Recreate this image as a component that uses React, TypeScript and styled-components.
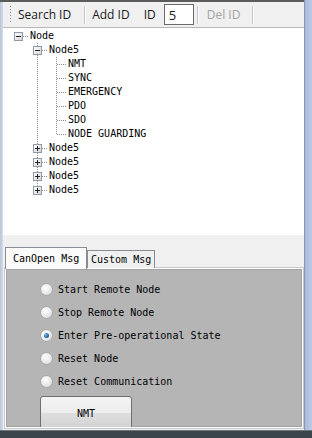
import React from 'react';
import styled, { createGlobalStyle } from 'styled-components';

const GlobalStyle = createGlobalStyle`
  html, body {
    margin: 0;
    padding: 0;
    width: 312px;
    height: 438px;
    overflow: hidden;
    background: #f0f0f0;
  }
`;

const Frame = styled.div`
  width: 312px;
  height: 438px;
  display: flex;
  flex-direction: column;
`;

const Body = styled.div`
  flex: 1;
  display: flex;
  min-height: 0;
`;

const LeftEdge = styled.div`
  width: 3px;
  background: linear-gradient(to right, #b7c4d8, #d3dcea);
  border-top: 2px solid #5b5b5b;
`;

const RightEdge = styled.div`
  width: 7px;
  border-left: 1px solid #8796b3;
  background: linear-gradient(to right, #a9b9d9, #bccbe6);
`;

const BottomBar = styled.div`
  height: 7px;
  background: #3c444c;
  border-top: 1px solid #6d7680;
`;

const Main = styled.div`
  flex: 1;
  display: flex;
  flex-direction: column;
  min-width: 0;
`;

const Toolbar = styled.div`
  height: 25px;
  border-top: 2px solid #5b5b5b;
  border-bottom: 1px solid #b8b8b8;
  background: #f0f0f0;
  display: flex;
  align-items: center;
  font-family: 'Open Sans', 'Liberation Sans', sans-serif;
  font-size: 12px;
  color: #1a1a1a;
`;

const Grip = styled.div`
  width: 3px;
  height: 18px;
  margin-left: 6px;
  background-image: repeating-linear-gradient(to bottom, #8a8a8a 0 1px, transparent 1px 3px);
  background-size: 1px 100%;
  background-repeat: no-repeat;
  background-position: 1px 0;
`;

const ToolButton = styled.span<{ $disabled?: boolean; $gap?: number }>`
  padding: 0 4px;
  margin-left: ${(p) => p.$gap ?? 2}px;
  color: ${(p) => (p.$disabled ? '#a3a3a3' : '#1a1a1a')};
  white-space: nowrap;
`;

const Separator = styled.div<{ $gap: number }>`
  width: 1px;
  height: 18px;
  margin-left: ${(p) => p.$gap}px;
  background: #c4c4c4;
  box-shadow: 1px 0 0 #ffffff;
`;

const IdBox = styled.div`
  height: 19px;
  width: 24px;
  margin-left: 4px;
  border: 1px solid #6a6a6a;
  background: #ffffff;
  display: flex;
  align-items: center;
  padding-left: 4px;
  box-sizing: content-box;
  font-size: 13px;
`;

const Tree = styled.div`
  height: 206px;
  background: #ffffff;
  padding: 1px 0 0 6px;
  font-family: 'DejaVu Sans Mono', 'Liberation Mono', monospace;
  font-size: 10px;
  color: #000000;
`;

const TreeRow = styled.div`
  display: flex;
  height: 14px;
  align-items: center;
`;

const dotsV = 'repeating-linear-gradient(to bottom, #8c8c8c 0 1px, transparent 1px 2px)';
const dotsH = 'repeating-linear-gradient(to right, #8c8c8c 0 1px, transparent 1px 2px)';

const Guide = styled.div<{ $line: boolean }>`
  width: 19px;
  height: 14px;
  flex: none;
  position: relative;
  &::before {
    content: '';
    display: ${(p) => (p.$line ? 'block' : 'none')};
    position: absolute;
    left: 9px;
    top: 0;
    bottom: 0;
    width: 1px;
    background: ${dotsV};
  }
`;

const Joint = styled.div<{ $up: boolean; $down: boolean }>`
  width: 19px;
  height: 14px;
  flex: none;
  position: relative;
  &::before {
    content: '';
    display: ${(p) => (p.$up || p.$down ? 'block' : 'none')};
    position: absolute;
    left: 9px;
    top: ${(p) => (p.$up ? 0 : 7)}px;
    bottom: ${(p) => (p.$down ? 0 : 7)}px;
    width: 1px;
    background: ${dotsV};
  }
  &::after {
    content: '';
    position: absolute;
    left: 10px;
    right: 0;
    top: 7px;
    height: 1px;
    background: ${dotsH};
  }
`;

const ExpanderBox = styled.svg`
  position: absolute;
  left: 5px;
  top: 3px;
  z-index: 1;
`;

const Label = styled.span`
  margin-left: 2px;
  white-space: pre;
  line-height: 14px;
`;

const TabArea = styled.div`
  flex: 1;
  display: flex;
  flex-direction: column;
  padding: 12px 1px 2px 2px;
  background: #f0f0f0;
  min-height: 0;
`;

const TabStrip = styled.div`
  display: flex;
  align-items: flex-end;
  height: 21px;
  font-family: 'DejaVu Sans Mono', 'Liberation Mono', monospace;
  font-size: 10px;
`;

const Tab = styled.div<{ $active?: boolean }>`
  height: ${(p) => (p.$active ? 21 : 17)}px;
  padding: 0 ${(p) => (p.$active ? 7 : 3)}px;
  width: ${(p) => (p.$active ? 66 : 60)}px;
  display: flex;
  align-items: center;
  border: 1px solid #898c95;
  border-bottom: none;
  background: ${(p) => (p.$active ? '#fbfbfb' : '#f0f0f0')};
  position: relative;
  z-index: ${(p) => (p.$active ? 2 : 0)};
  margin-bottom: ${(p) => (p.$active ? -1 : 0)}px;
  white-space: pre;
  box-sizing: content-box;
`;

const Panel = styled.div`
  flex: 1;
  min-height: 0;
  overflow: hidden;
  border: 1px solid #ffffff;
  box-shadow: inset 0 0 0 1px #a3a3a3, 0 0 0 1px #c8c8c8;
  background: #b5b5b5;
  padding: 9px 0 0 34px;
  font-family: 'DejaVu Sans Mono', 'Liberation Mono', monospace;
  font-size: 10px;
  color: #000000;
`;

const RadioRow = styled.label`
  display: flex;
  align-items: center;
  height: 23px;
  gap: 5px;
  white-space: pre;
`;

const RadioDot = styled.span<{ $checked?: boolean }>`
  width: 11px;
  height: 11px;
  border-radius: 50%;
  border: 1px solid #a9a9a9;
  background: radial-gradient(circle at 40% 35%, #ffffff 0, #f1f1f1 35%, #d6d6d6 100%);
  display: flex;
  align-items: center;
  justify-content: center;
  flex: none;
  &::after {
    content: '';
    display: ${(p) => (p.$checked ? 'block' : 'none')};
    width: 5px;
    height: 5px;
    border-radius: 50%;
    background: radial-gradient(circle at 35% 35%, #7fb4e6 0, #2a6db0 55%, #123e73 100%);
  }
`;

const NmtButton = styled.button`
  margin-top: 3px;
  width: 92px;
  height: 34px;
  border: 1px solid #707070;
  border-radius: 3px;
  background: linear-gradient(to bottom, #f4f4f4 0%, #ececec 50%, #dedede 50%, #d2d2d2 100%);
  font-family: 'DejaVu Sans Mono', 'Liberation Mono', monospace;
  font-size: 10px;
  color: #000000;
  padding: 0;
`;

type Node = { label: string; open?: boolean; children?: Node[] };

const leaves = ['NMT', 'SYNC', 'EMERGENCY', 'PDO', 'SDO', 'NODE GUARDING'].map((label) => ({ label }));

const tree: Node[] = [
  {
    label: 'Node',
    open: true,
    children: [
      { label: 'Node5', open: true, children: leaves },
      { label: 'Node5', children: [{ label: 'x' }] },
      { label: 'Node5', children: [{ label: 'x' }] },
      { label: 'Node5', children: [{ label: 'x' }] },
      { label: 'Node5', children: [{ label: 'x' }] },
    ],
  },
];

type FlatRow = { label: string; level: number; guides: boolean[]; hasNext: boolean; expandable: boolean; open: boolean };

function flatten(nodes: Node[], level: number, guides: boolean[], out: FlatRow[]) {
  nodes.forEach((n, i) => {
    const hasNext = i < nodes.length - 1;
    out.push({ label: n.label, level, guides, hasNext, expandable: !!n.children, open: !!n.open });
    if (n.children && n.open) flatten(n.children, level + 1, [...guides, hasNext], out);
  });
  return out;
}

const Expander = ({ open }: { open: boolean }) => (
  <ExpanderBox width="9" height="9" viewBox="0 0 9 9">
    <defs>
      <linearGradient id="exp" x1="0" y1="0" x2="1" y2="1">
        <stop offset="0" stopColor="#ffffff" />
        <stop offset="1" stopColor="#d4d4d4" />
      </linearGradient>
    </defs>
    <rect x="0.5" y="0.5" width="8" height="8" fill="url(#exp)" stroke="#8f9aa8" />
    <path d="M2 4.5h5" stroke="#222" strokeWidth="1" />
    {!open && <path d="M4.5 2v5" stroke="#222" strokeWidth="1" />}
  </ExpanderBox>
);

const radios = [
  'Start Remote Node',
  'Stop Remote Node',
  'Enter Pre-operational State',
  'Reset Node',
  'Reset Communication',
];

export default function App() {
  const rows = flatten(tree, 0, [], []);
  return (
    <Frame>
      <GlobalStyle />
      <Body>
        <LeftEdge />
        <Main>
          <Toolbar>
            <Grip />
            <ToolButton>Search ID</ToolButton>
            <Separator $gap={9} />
            <ToolButton $gap={3}>Add ID</ToolButton>
            <ToolButton $gap={6}>ID</ToolButton>
            <IdBox>5</IdBox>
            <Separator $gap={3} />
            <ToolButton $disabled $gap={5}>Del ID</ToolButton>
            <Separator $gap={8} />
          </Toolbar>
          <Tree>
            {rows.map((r, i) => (
              <TreeRow key={i}>
                {r.guides.map((g, j) => (
                  <Guide key={j} $line={g} />
                ))}
                <Joint $up={r.level > 0} $down={r.hasNext}>
                  {r.expandable && <Expander open={r.open} />}
                </Joint>
                <Label>{r.label}</Label>
              </TreeRow>
            ))}
          </Tree>
          <TabArea>
            <TabStrip>
              <Tab $active>CanOpen Msg</Tab>
              <Tab>Custom Msg</Tab>
            </TabStrip>
            <Panel>
              {radios.map((r, i) => (
                <RadioRow key={r}>
                  <RadioDot $checked={i === 2} />
                  {r}
                </RadioRow>
              ))}
              <NmtButton>NMT</NmtButton>
            </Panel>
          </TabArea>
        </Main>
        <RightEdge />
      </Body>
      <BottomBar />
    </Frame>
  );
}
